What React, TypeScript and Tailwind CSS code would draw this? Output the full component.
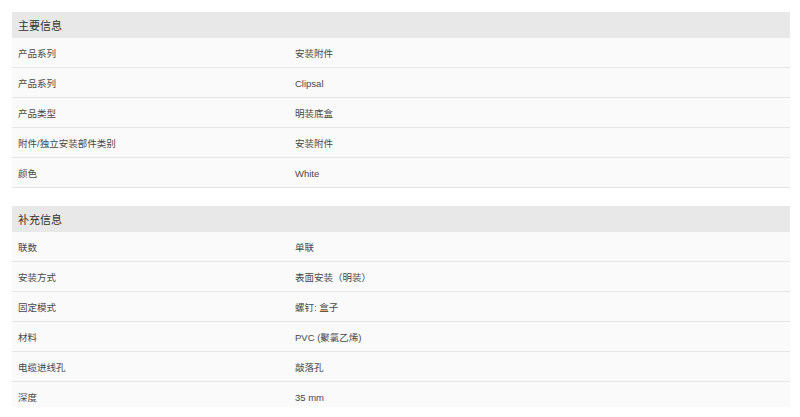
const sections = [
  {
    title: "主要信息",
    rows: [
      ["产品系列", "安装附件"],
      ["产品系列", "Clipsal"],
      ["产品类型", "明装底盒"],
      ["附件/独立安装部件类别", "安装附件"],
      ["颜色", "White"],
    ],
  },
  {
    title: "补充信息",
    rows: [
      ["联数", "单联"],
      ["安装方式", "表面安装（明装）"],
      ["固定模式", "螺钉: 盒子"],
      ["材料", "PVC (聚氯乙烯)"],
      ["电缆进线孔", "敲落孔"],
      ["深度", "35 mm"],
    ],
  },
];

export default function App() {
  return (
    <div className="w-[800px] h-[417px] bg-white">
      <div
        className="h-[407px] overflow-hidden pt-3 pl-3 pr-[10px] text-[#333]"
        style={{ fontFamily: '"Liberation Sans", Arial, "Noto Sans CJK SC", sans-serif' }}
      >
        {sections.map((s, i) => (
          <div key={s.title} className={i > 0 ? "mt-[18px]" : ""}>
            <div className="h-[26px] bg-[#e8e8e8] flex items-center pl-[6px] pt-[2px] text-[11px]">
              {s.title}
            </div>
            {s.rows.map(([k, v], j) => (
              <div
                key={j}
                className="h-[30px] bg-[#fafafa] border-b border-[#e6e6e6] flex items-center pt-[3px] text-[9.5px] text-[#484848]"
              >
                <div className="w-[283px] pl-[6px]">{k}</div>
                <div>{v}</div>
              </div>
            ))}
          </div>
        ))}
      </div>
    </div>
  );
}
